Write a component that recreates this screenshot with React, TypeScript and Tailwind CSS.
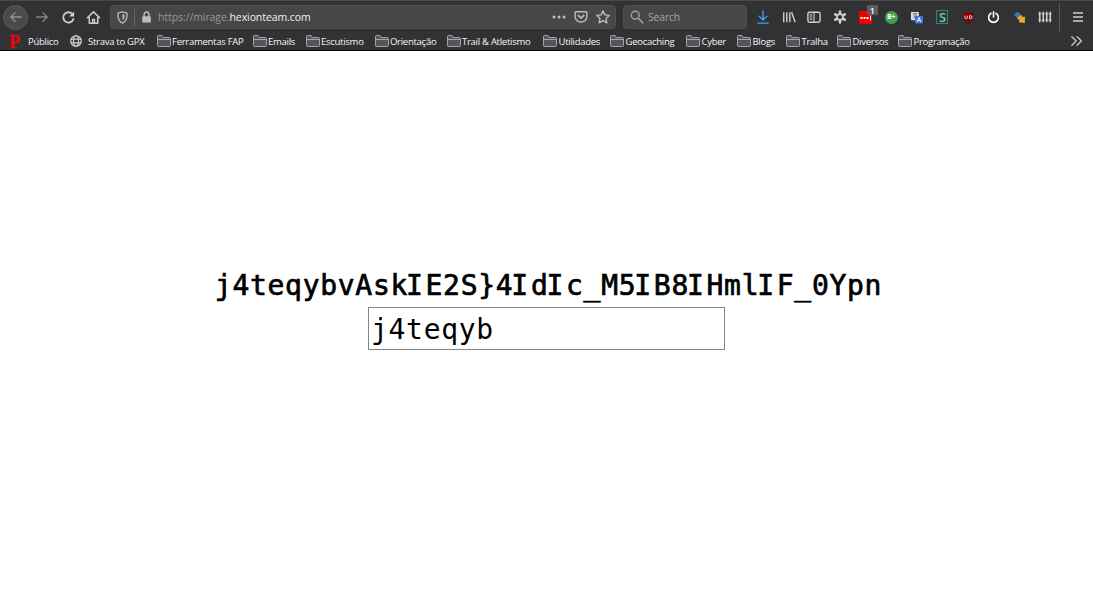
import React from "react";

type IconProps = { children: React.ReactNode; className?: string };

const Icon = ({ children, className = "" }: IconProps) => (
  <svg
    viewBox="0 0 16 16"
    className={`shrink-0 ${className}`}
    fill="none"
    stroke="currentColor"
    strokeWidth="1.6"
    strokeLinecap="round"
    strokeLinejoin="round"
  >
    {children}
  </svg>
);

const Slot = ({ children }: { children: React.ReactNode }) => (
  <div className="relative flex h-6 w-[25.6px] shrink-0 items-center justify-center">{children}</div>
);

const Folder = () => (
  <svg viewBox="0 0 14 12" className="mb-px h-3 w-3.5 shrink-0" fill="#56565a" stroke="#a5a5a8" strokeWidth="1">
    <path d="M.5 10.500V1.500Q.5.500 1.500.500H5l1 2h6.500q1 0 1 1v7q0 1-1 1h-11q-1 0-1-1Z" />
    <path d="M1 4.500h12" />
  </svg>
);

const bookmarks = [
  { label: "Ferramentas FAP", box: "w-[96px]" },
  { label: "Emails", box: "w-[53px]" },
  { label: "Escutismo", box: "w-[69px]" },
  { label: "Orientação", box: "w-[72px]" },
  { label: "Trail & Atletismo", box: "w-[96.500px]" },
  { label: "Utilidades", box: "w-[67px]" },
  { label: "Geocaching", box: "w-[76px]" },
  { label: "Cyber", box: "w-[51px]" },
  { label: "Blogs", box: "w-[49px]" },
  { label: "Tralha", box: "w-[51px]" },
  { label: "Diversos", box: "w-[61px]" },
  { label: "Programação", box: "w-[80px]" },
];

function Toolbar() {
  return (
    <div className="flex h-8 items-center text-[#cfcfd1]">
      <div className="ml-[3px] flex h-[25px] w-[25px] shrink-0 items-center justify-center rounded-full border border-[#5c5c5f] bg-[#4a4a4d] text-[#929294]">
        <Icon className="h-3.5 w-3.5"><path d="M14 8H2M7 3 2 8l5 5" /></Icon>
      </div>
      <div className="ml-[7px] flex w-3.5 shrink-0 text-[#858588]">
        <Icon className="h-3.5 w-3.5"><path d="M2 8h12M9 3l5 5-5 5" /></Icon>
      </div>
      <div className="ml-3 flex w-4 shrink-0">
        <Icon className="h-[15px] w-[15px]">
          <path d="M13.200 9.500A5.500 5.500 0 1 1 12 4.200" strokeWidth="1.900" />
          <path d="M14 1.500V7H8.500Z" fill="currentColor" stroke="none" />
        </Icon>
      </div>
      <div className="ml-[9px] flex w-4 shrink-0">
        <Icon className="h-[15px] w-[15px]">
          <path d="M1.500 8.300 8 2l6.500 6.300M3.500 8v6h9V8" />
          <path d="M7 14v-4h2v4" strokeWidth="1.500" />
        </Icon>
      </div>
      <div className="ml-2 flex h-6 w-[506px] shrink-0 items-center rounded-sm border border-[#505053] bg-[#474749]">
        <Icon className="ml-[5px] h-[13px] w-[13px] text-[#bcbcbe]">
          <path d="M8 1 2.500 2.500v4Q3 12.500 8 15q5-2.500 5.500-8.500v-4Z" />
          <path d="M8 4v7.500q2.300-1.500 2.600-5V4.500Z" fill="currentColor" stroke="none" />
        </Icon>
        <div className="ml-[5px] h-[17px] w-px bg-[#62646e]" />
        <svg viewBox="0 0 12 14" className="ml-[6px] h-3 w-[11px]" fill="#bdbdbf">
          <rect x="1" y="6" width="10" height="7.500" rx="1" />
          <path d="M3.200 7V4a2.800 2.800 0 0 1 5.600 0v3" fill="none" stroke="#bdbdbf" strokeWidth="1.700" />
        </svg>
        <div className="mt-0.5 ml-[6px] grow whitespace-nowrap font-['Open_Sans','Noto_Sans',sans-serif] text-[10.5px] tracking-[-0.08px] text-[#98989a]">
          https://mirage.<span className="text-[#f0f0f1]">hexionteam.com</span>
        </div>
        <svg viewBox="0 0 14 4" className="h-1 w-3.5" fill="#bcbcbe">
          <circle cx="2" cy="2" r="1.500" /><circle cx="7" cy="2" r="1.500" /><circle cx="12" cy="2" r="1.500" />
        </svg>
        <Icon className="ml-[8px] h-3.5 w-3.5 text-[#bcbcbe]">
          <path d="M2.300 2h11.400q1 0 1 1v4.500a6.700 6.200 0 0 1-13.400 0V3q0-1 1-1Z" />
          <path d="m4.800 6.200 3.200 3 3.200-3" strokeWidth="1.900" />
        </Icon>
        <Icon className="mr-[5px] ml-[8px] h-3.5 w-3.5 text-[#bcbcbe]">
          <path d="m8 1 2.100 4.600 5 .6-3.700 3.400 1 5L8 12.200l-4.400 2.400 1-5L.9 6.200l5-.6Z" />
        </Icon>
      </div>
      <div className="ml-[7px] flex h-6 w-[124px] shrink-0 items-center rounded-sm border border-[#505053] bg-[#474749] text-[#a4a4a6]">
        <Icon className="ml-[6px] h-3.5 w-3.5">
          <circle cx="6" cy="6" r="4.500" /><path d="m9.500 9.500 5 5" strokeWidth="1.800" />
        </Icon>
        <span className="mt-0.5 ml-1 font-['Open_Sans','Noto_Sans',sans-serif] text-[10.5px] tracking-[-0.2px]">Search</span>
      </div>
      <div className="ml-[3.500px] flex shrink-0">
        <Slot>
          <Icon className="h-3.5 w-3.5 text-[#409df0]"><path d="M8 1v10M3.500 7 8 11.500 12.500 7M2 15h12" /></Icon>
        </Slot>
        <Slot>
          <Icon className="h-3.5 w-3.5"><path d="M2 2.500v11.500M5.500 2.500v11.500M9 2.500v11.500M11 2.500l4 11.500" strokeLinecap="butt" /></Icon>
        </Slot>
        <Slot>
          <Icon className="h-3.5 w-3.5">
            <rect x="1" y="2.500" width="14" height="11.500" rx="2" />
            <path d="M8 2.500V14M3.500 5.500h2M3.500 8h2M3.500 10.500h2" strokeWidth="1.300" />
          </Icon>
        </Slot>
        <Slot>
          <Icon className="h-3.5 w-3.5">
            <circle cx="8" cy="8" r="3.400" strokeWidth="2" />
            <path d="M8 1.800v2M8 12.200v2M2.600 4.900l1.700 1M11.700 10.100l1.700 1M2.600 11.100l1.700-1M11.700 5.900l1.700-1" strokeWidth="3" />
          </Icon>
        </Slot>
        <Slot>
          <svg viewBox="0 0 13 13" className="h-[13px] w-[13px]">
            <path d="M0 1q0-1 1-1h11q1 0 1 1v11q0 1-1 1H1q-1 0-1-1Z" fill="#f20000" />
            <path d="M1.500 6h2v2h-2zM4.500 6h2v2h-2zM7.500 6h2v2h-2zM11 4.500h1v5h-1z" fill="#fff" />
          </svg>
          <span className="absolute top-0 left-[14px] flex h-[10px] w-[11px] items-center justify-center rounded-[1px] bg-[#5d5d61] font-['Open_Sans',sans-serif] text-[9px] leading-none font-semibold text-white">1</span>
        </Slot>
        <Slot>
          <span className="flex h-[13px] w-[13px] items-center justify-center rounded-full bg-[#40a34a] font-['Open_Sans',sans-serif] text-[7px] font-bold text-white">B+</span>
        </Slot>
        <Slot>
          <svg viewBox="0 0 14 14" className="h-[13px] w-[13px]">
            <rect x="1" y="1" width="8.500" height="9" rx="1" fill="#dddddf" />
            <path d="M3 3h4.500M5.200 2v1M3.500 7.500Q6.500 6 6.800 3.500M3.800 4.500 7 7.500" fill="none" stroke="#56565a" strokeWidth=".9" />
            <rect x="5.500" y="5.500" width="8.500" height="8" rx="1" fill="#3976df" />
            <path d="m7.500 12 2.200-5 2.200 5M8.300 10.400h2.900" fill="none" stroke="#fff" strokeWidth="1" />
          </svg>
        </Slot>
        <Slot>
          <span className="flex h-3.5 w-3 items-center justify-center border border-[#447c71] bg-[#213e39] font-['Open_Sans',sans-serif] text-[13px] leading-none font-semibold text-[#87b9ad]">S</span>
        </Slot>
        <Slot>
          <svg viewBox="0 0 14 14" className="h-[13px] w-[13px]">
            <path d="M7 .5Q4.500 2 1.500 2v4.500Q2 11 7 13.500q5-2.500 5.500-7V2Q9.500 2 7 .5Z" fill="#850008" />
            <path d="M3.200 5v2q0 1.300 1.300 1.300T5.800 7V5" fill="none" stroke="#fff" strokeWidth=".9" />
            <path d="M8.200 5v3.300h.8q1.800 0 1.800-1.650T9 5Z" fill="none" stroke="#fff" strokeWidth=".9" />
          </svg>
        </Slot>
        <Slot>
          <Icon className="h-[13px] w-[13px] text-white">
            <path d="M5 2.800a6 6 0 1 0 6 0M8 1v6.500" strokeWidth="2" />
          </Icon>
        </Slot>
        <Slot>
          <svg viewBox="0 0 14 14" className="h-[13px] w-[13px]">
            <path d="m1 4 4-3.500 4.500 4.800-4 3.500Z" fill="#2b83b5" />
            <path d="M4.500 7.800 8.500 4.300l2 2.200L12.800 6v7L6 12l1-1.700Z" fill="#eda72d" />
          </svg>
        </Slot>
        <Slot>
          <Icon className="h-3.5 w-3.5">
            <path d="M2 2v12M6 2v12M10 2v12M14 2v12" strokeLinecap="butt" strokeWidth="1.800" />
            <path d="M.5 4.500h15M.5 11.500h15" strokeWidth=".8" />
          </Icon>
        </Slot>
      </div>
      <div className="ml-[1px] h-[29px] w-px shrink-0 bg-[#58585b]" />
      <Icon className="ml-[10px] h-4 w-4"><path d="M3 4h10M3 8h10M3 12h10" strokeWidth="1.400" strokeLinecap="butt" /></Icon>
    </div>
  );
}

const challenge = "j4teqybvAskIE2S}4IdIc_M5IB8IHmlIF_0Ypn";

export default function App() {
  return (
    <div className="flex h-[591px] w-[1093px] flex-col overflow-hidden bg-white">
      <header className="h-[51px] shrink-0 border-t border-b border-t-[#484b46] border-b-[#080809] bg-[#323234]">
        <Toolbar />
        <div className="flex h-[17px] items-center font-['Open_Sans','Noto_Sans',sans-serif] text-[9.5px] tracking-[-0.27px] whitespace-nowrap text-[#f5f5f6]">
          <span className="ml-[9px] w-[19px] font-['Liberation_Serif',serif] text-[18px] leading-none font-bold text-[#e10612] [-webkit-text-stroke:0.5px_#e10612]">P</span>
          <span className="mt-px w-[42px]">Público</span>
          <Icon className="mb-px h-3 w-3 text-[#cececf]">
            <circle cx="8" cy="8" r="7" /><ellipse cx="8" cy="8" rx="3.300" ry="7" /><path d="M1.500 5.500h13M1.500 10.500h13" />
          </Icon>
          <span className="mt-px ml-[6px] w-[68.5px]">Strava to GPX</span>
          {bookmarks.map((b) => (
            <div key={b.label} className={`flex shrink-0 items-center gap-[1.5px] ${b.box}`}>
              <Folder />
              <span className="mt-px">{b.label}</span>
            </div>
          ))}
          <Icon className="mr-[9px] mb-px ml-auto h-3.5 w-3.5 text-[#cececf]"><path d="m2 3 5 5-5 5M8 3l5 5-5 5" /></Icon>
        </div>
      </header>
      <main className="flex grow flex-col items-center pt-[214px] font-['DejaVu_Sans_Mono',monospace] text-[28px] text-black">
        <h1 className="ml-1 h-[42px] leading-[42px] tracking-[0.7px] whitespace-pre [-webkit-text-stroke:0.7px_black]">
          {challenge.split(/(I)/).map((part, i) =>
            part === "I" ? <span key={i} className="mr-0.5 -ml-0.5">{part}</span> : part
          )}
        </h1>
        <input
          className="h-[43px] w-[357px] border border-[#858585] bg-white px-[2px] pt-[2px] tracking-[0.7px] outline-none"
          defaultValue="j4teqyb"
          aria-label="Text"
        />
      </main>
    </div>
  );
}
